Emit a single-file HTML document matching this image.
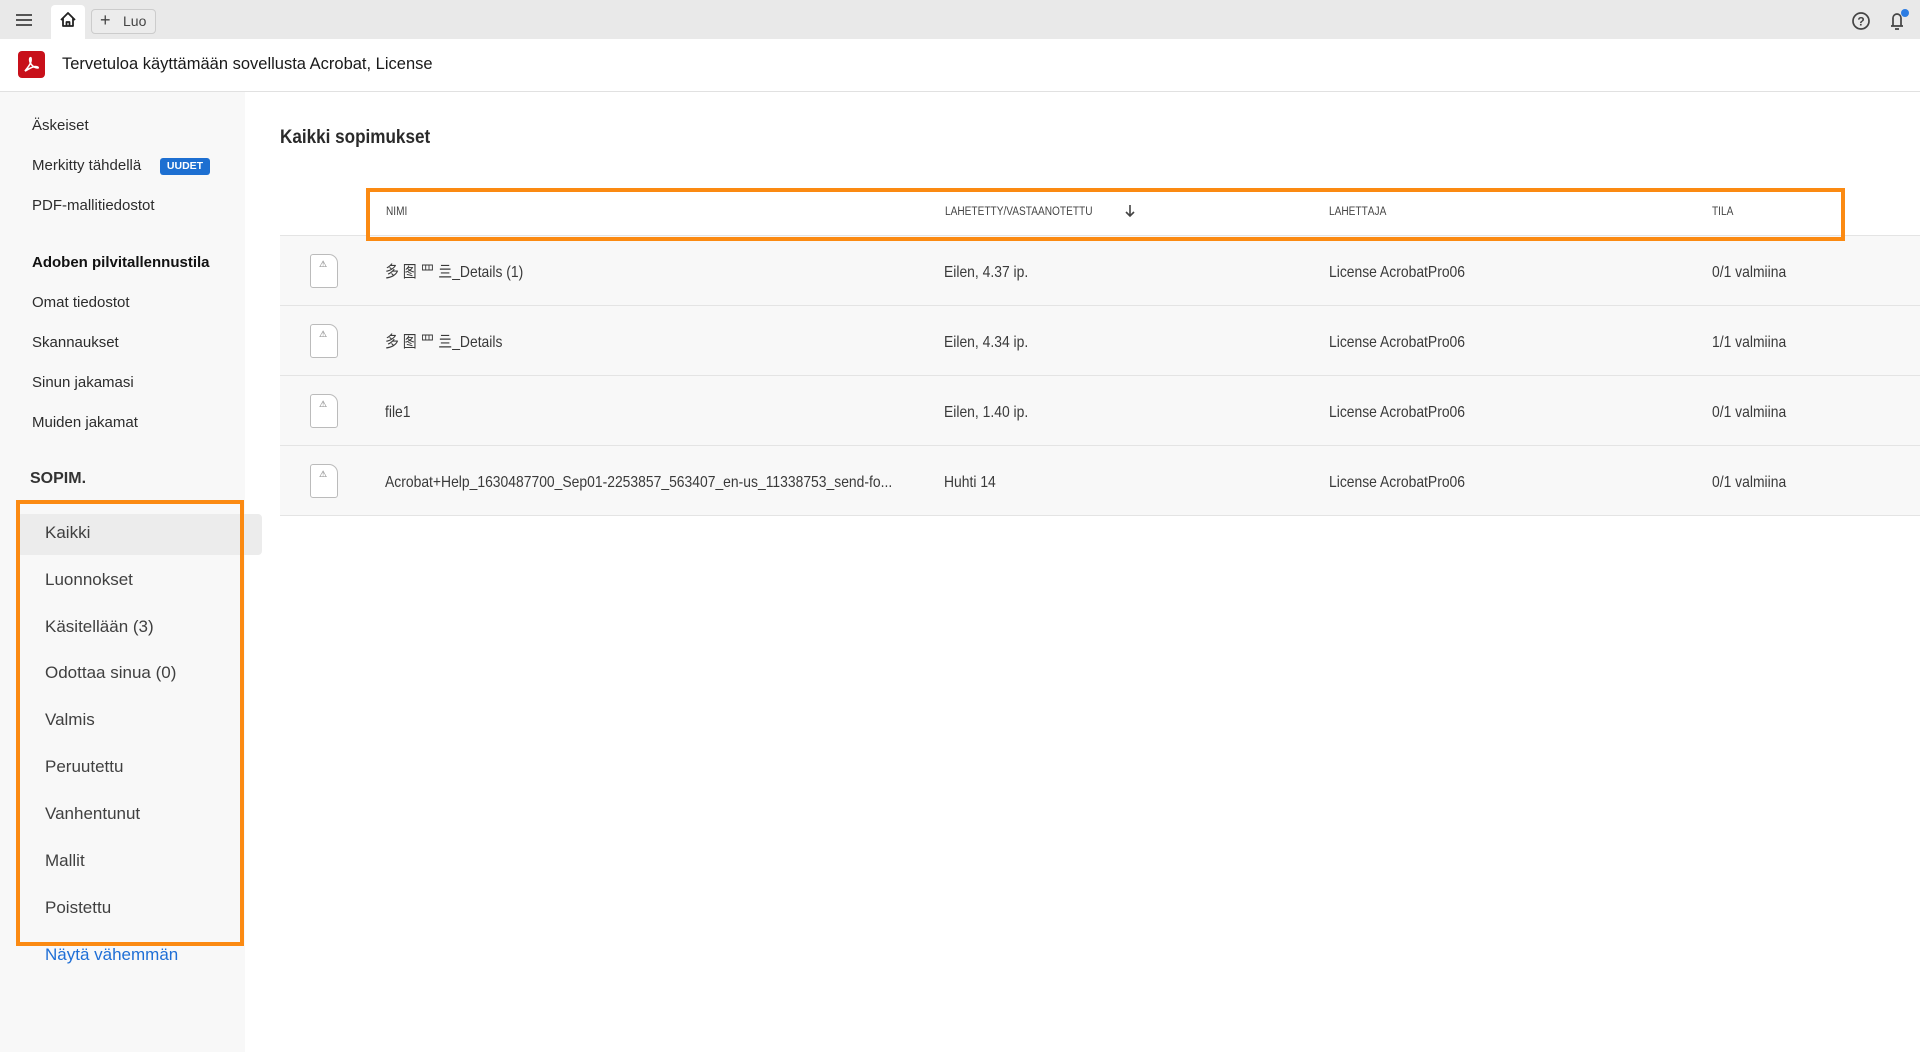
<!DOCTYPE html>
<html><head><meta charset="utf-8"><style>
*{margin:0;padding:0;box-sizing:border-box}
body{width:1920px;height:1052px;overflow:hidden;background:#fff;font-family:"Liberation Sans",sans-serif;color:#2c2c2c;position:relative}
.abs{position:absolute;white-space:nowrap}
.top{position:absolute;left:0;top:0;width:1920px;height:39px;background:#e9e9e9}
.hdr{position:absolute;left:0;top:39px;width:1920px;height:53px;background:#fff;border-bottom:1px solid #e1e1e1}
.side{position:absolute;left:0;top:92px;width:245px;height:960px;background:#f8f8f8}
.si{position:absolute;left:32px;font-size:15px;color:#2c2c2c}
.sub{position:absolute;left:45px;font-size:17px;color:#404040}
.row{position:absolute;left:280px;width:1640px;height:70px;background:#f8f8f8;border-bottom:1px solid #e4e4e4}
.row span{position:absolute;top:28px;font-size:15.8px;line-height:18px;height:18px;color:#3a3a3a;transform:scaleX(0.88);transform-origin:left center;font-family:"Liberation Sans","Noto Sans CJK SC",sans-serif}
.ic{position:absolute;left:30px;top:18px;width:28px;height:34px;background:#fff;border:1px solid #bbb;border-radius:3px 9px 3px 3px}
.ic::after{content:"⚠";position:absolute;left:8px;top:4px;font-size:9px;color:#666}
.hd{position:absolute;top:202px;font-size:11.5px;line-height:20px;color:#444;white-space:nowrap;font-family:"Liberation Sans Narrow","Liberation Sans",sans-serif;transform:scaleX(0.88);transform-origin:left center}
</style></head><body>
<div class="top"></div>
<svg class="abs" style="left:15px;top:13px" width="18" height="14"><path d="M1 2H17M1 7H17M1 12H17" stroke="#555" stroke-width="2"/></svg>
<div class="abs" style="left:51px;top:5px;width:34px;height:34px;background:#fff;border-radius:4px 4px 0 0"></div>
<svg class="abs" style="left:59px;top:11px" width="18" height="17"><path d="M2 9L9 2L16 9M4 7V15H14V7M7.5 15V11H10.5V15" stroke="#222" stroke-width="1.8" fill="none" stroke-linejoin="round"/></svg>
<div class="abs" style="left:91px;top:9px;width:65px;height:25px;border:1px solid #ccc;border-radius:4px;background:#ececec"></div>
<div class="abs" style="left:100px;top:10px;font-size:18px;color:#444">+</div>
<div class="abs" style="left:123px;top:13px;font-size:14px;color:#444">Luo</div>
<svg class="abs" style="left:1851px;top:11px" width="20" height="20"><circle cx="10" cy="10" r="8" stroke="#444" stroke-width="1.7" fill="none"/><text x="10" y="14.5" font-size="12" font-weight="bold" text-anchor="middle" fill="#444" font-family="Liberation Sans">?</text></svg>
<svg class="abs" style="left:1886px;top:8px" width="26" height="24"><path d="M5 18H17M7 18V10A4 4 0 0 1 15 10V18M9 21H13" stroke="#444" stroke-width="1.7" fill="none"/><circle cx="19" cy="5" r="4" fill="#2d7de3"/></svg>
<div class="hdr"></div>
<div class="abs" style="left:18px;top:51px;width:27px;height:27px;background:#c8101a;border-radius:4px"></div>
<svg class="abs" style="left:21px;top:54px" width="21" height="21"><path d="M4 17C7 13 11 9 10 4C9 3 8 5 9 8C10 11 13 14 17 14C18 13 15 12 12 13C9 14 6 16 4 17Z" stroke="#fff" stroke-width="1.6" fill="none"/></svg>
<div class="abs" style="left:62px;top:55px;font-size:16.5px;color:#1a1a1a">Tervetuloa käyttämään sovellusta Acrobat, License</div>
<div class="side"></div>
<div class="si" style="top:117px">Äskeiset</div>
<div class="si" style="top:157px">Merkitty tähdellä</div>
<div class="abs" style="left:160px;top:158px;width:50px;height:17px;background:#1d6fd1;border-radius:3px;color:#fff;font-size:10.5px;font-weight:bold;text-align:center;line-height:17px">UUDET</div>
<div class="si" style="top:197px">PDF-mallitiedostot</div>
<div class="si" style="top:254px;font-weight:bold;color:#111">Adoben pilvitallennustila</div>
<div class="si" style="top:294px">Omat tiedostot</div>
<div class="si" style="top:334px">Skannaukset</div>
<div class="si" style="top:374px">Sinun jakamasi</div>
<div class="si" style="top:414px">Muiden jakamat</div>
<div class="si" style="top:470px;left:30px;font-size:16px;font-weight:bold;color:#333">SOPIM.</div>
<div class="abs" style="left:17px;top:514px;width:245px;height:41px;background:#ececec;border-radius:4px"></div>
<div class="abs" style="left:16px;top:500px;width:228px;height:446px;border:4px solid #fb8a12"></div>
<div class="sub" style="top:523px">Kaikki</div>
<div class="sub" style="top:570px">Luonnokset</div>
<div class="sub" style="top:617px">Käsitellään (3)</div>
<div class="sub" style="top:663px">Odottaa sinua (0)</div>
<div class="sub" style="top:710px">Valmis</div>
<div class="sub" style="top:757px">Peruutettu</div>
<div class="sub" style="top:804px">Vanhentunut</div>
<div class="sub" style="top:851px">Mallit</div>
<div class="sub" style="top:898px">Poistettu</div>
<div class="sub" style="top:945px;color:#1f6fd6">Näytä vähemmän</div>
<div class="abs" style="left:280px;top:127px;font-size:19px;font-weight:bold;color:#2a2a2a;transform:scaleX(0.9);transform-origin:left">Kaikki sopimukset</div>
<div class="abs" style="left:280px;top:235px;width:1640px;height:1px;background:#e4e4e4"></div>
<div class="hd" style="left:386px">NIMI</div>
<div class="hd" style="left:945px">LÄHETETTY/VASTAANOTETTU</div>
<svg class="abs" style="left:1124px;top:204px" width="12" height="14"><path d="M6 1V12M2 8L6 12L10 8" stroke="#444" stroke-width="1.6" fill="none"/></svg>
<div class="hd" style="left:1329px">LÄHETTÄJÄ</div>
<div class="hd" style="left:1712px">TILA</div>
<div class="row" style="top:236px"><div class="ic"></div><span style="left:105px">多 图 罒 亖_Details (1)</span><span style="left:664px">Eilen, 4.37 ip.</span><span style="left:1049px">License AcrobatPro06</span><span style="left:1432px">0/1 valmiina</span></div>
<div class="row" style="top:306px"><div class="ic"></div><span style="left:105px">多 图 罒 亖_Details</span><span style="left:664px">Eilen, 4.34 ip.</span><span style="left:1049px">License AcrobatPro06</span><span style="left:1432px">1/1 valmiina</span></div>
<div class="row" style="top:376px"><div class="ic"></div><span style="left:105px">file1</span><span style="left:664px">Eilen, 1.40 ip.</span><span style="left:1049px">License AcrobatPro06</span><span style="left:1432px">0/1 valmiina</span></div>
<div class="row" style="top:446px"><div class="ic"></div><span style="left:105px">Acrobat+Help_1630487700_Sep01-2253857_563407_en-us_11338753_send-fo...</span><span style="left:664px">Huhti 14</span><span style="left:1049px">License AcrobatPro06</span><span style="left:1432px">0/1 valmiina</span></div>
<div class="abs" style="left:366px;top:188px;width:1479px;height:53px;border:4px solid #fb8a12;z-index:5"></div>
</body></html>
